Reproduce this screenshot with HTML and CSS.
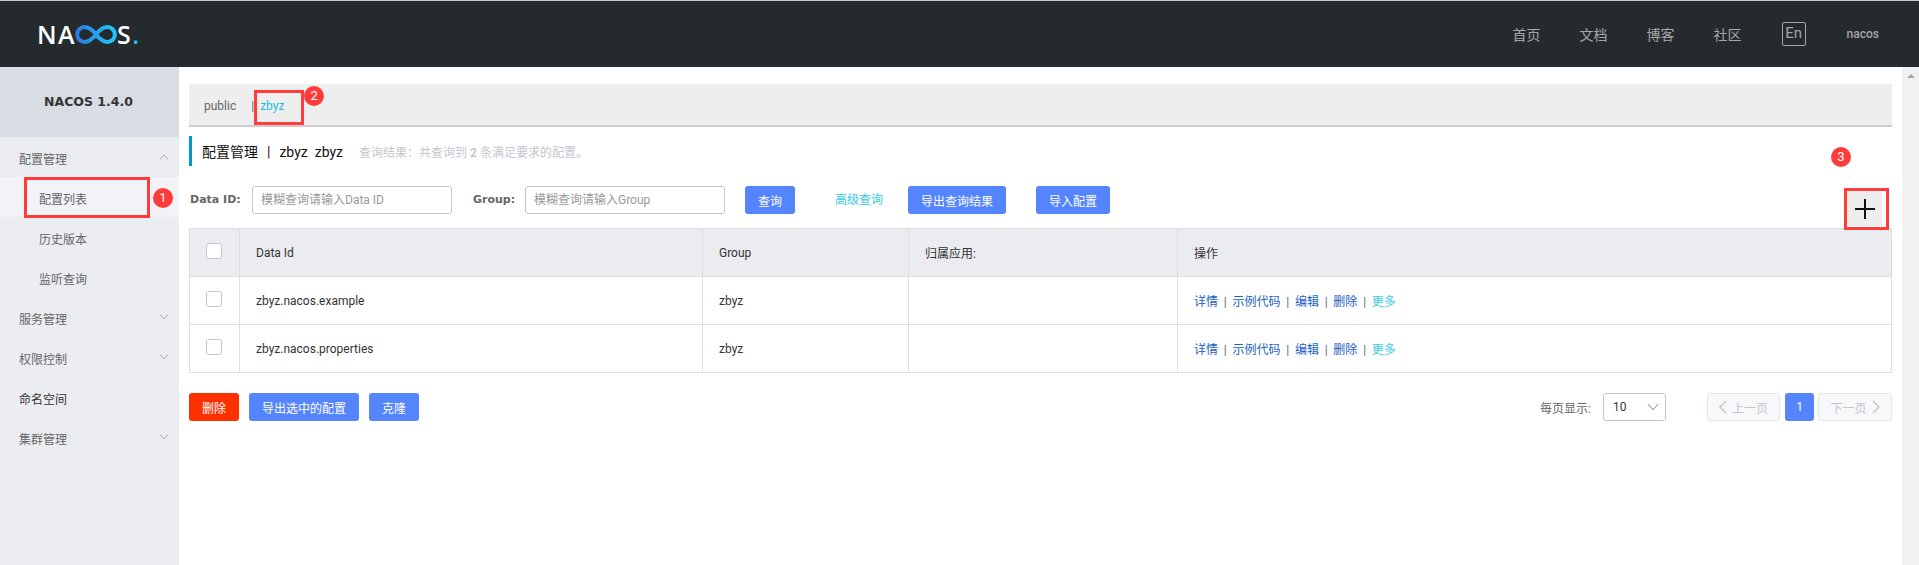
FILE: index.html
```html
<!DOCTYPE html>
<html lang="zh-CN">
<head>
  <meta charset="UTF-8" />
  <title>Nacos</title>
  <link rel="stylesheet" href="styles.css">
</head>
<body>
  <header class="topbar">
    <div class="logo">
      <span>NA</span>
      <svg class="logo-loop" width="44" height="19" viewBox="0 0 42 18" preserveAspectRatio="none">
        <defs>
          <linearGradient id="loop" x1="0" x2="1" y1="0" y2="0">
            <stop offset="0" stop-color="#2f78e0" />
            <stop offset="1" stop-color="#1fc9f7" />
          </linearGradient>
        </defs>
        <path d="M21 9C17.500 4.500 14.500 2 10 2a7 7 0 0 0 0 14c4.500 0 7.500-2.500 11-7s6.500-7 11-7a7 7 0 0 1 0 14c-4.500 0-7.500-2.500-11-7z" fill="none" stroke="url(#loop)" stroke-width="3.800" />
      </svg>
      <span>S</span><span class="logo-dot">.</span>
    </div>
    <nav class="topnav">
      <a>首页</a>
      <a>文档</a>
      <a>博客</a>
      <a>社区</a>
      <a class="lang">En</a>
      <a class="user">nacos</a>
    </nav>
  </header>

  <div class="layout">
    <aside class="sidebar">
      <div class="version">NACOS 1.4.0</div>
      <div class="menu-item"><span>配置管理</span><svg class="arrow" width="10" height="6" viewBox="0 0 10 6"><path d="M1 5.500l4-4.500 4 4.500" /></svg></div>
      <div class="menu-item sub active">
        <span>配置列表</span>
        <i class="mark-box box-one"></i>
        <b class="badge badge-one">1</b>
      </div>
      <div class="menu-item sub"><span>历史版本</span></div>
      <div class="menu-item sub"><span>监听查询</span></div>
      <div class="menu-item"><span>服务管理</span><svg class="arrow" width="10" height="6" viewBox="0 0 10 6"><path d="M1 .5l4 4.500 4-4.500" /></svg></div>
      <div class="menu-item"><span>权限控制</span><svg class="arrow" width="10" height="6" viewBox="0 0 10 6"><path d="M1 .5l4 4.500 4-4.500" /></svg></div>
      <div class="menu-item dark"><span>命名空间</span></div>
      <div class="menu-item"><span>集群管理</span><svg class="arrow" width="10" height="6" viewBox="0 0 10 6"><path d="M1 .5l4 4.500 4-4.500" /></svg></div>
    </aside>

    <main class="content">
      <div class="tabs">
        <span class="tab">public</span>
        <span class="tab-sep">|</span>
        <span class="tab current">
          zbyz
          <i class="mark-box box-two"></i>
          <b class="badge badge-two">2</b>
        </span>
      </div>

      <div class="title">
        <h2>配置管理<span class="title-sep">|</span>zbyz<span class="title-ns">zbyz</span></h2>
        <p>查询结果：共查询到 <b>2</b> 条满足要求的配置。</p>
      </div>

      <div class="search">
        <label class="search-label">Data ID:</label>
        <input class="search-input" type="text" placeholder="模糊查询请输入Data ID" />
        <label class="search-label group-label">Group:</label>
        <input class="search-input" type="text" placeholder="模糊查询请输入Group" />
        <button class="btn query">查询</button>
        <a class="advanced">高级查询</a>
        <button class="btn export">导出查询结果</button>
        <button class="btn import">导入配置</button>
        <div class="plus">
          <svg width="20" height="20" viewBox="0 0 20 20"><path d="M0 10h20M10 0v20" /></svg>
          <i class="mark-box box-three"></i>
          <b class="badge badge-three">3</b>
        </div>
      </div>

      <table class="grid">
        <colgroup>
          <col class="col-check" />
          <col class="col-id" />
          <col class="col-group" />
          <col class="col-app" />
          <col />
        </colgroup>
        <thead>
          <tr>
            <th><span class="check"></span></th>
            <th>Data Id</th>
            <th>Group</th>
            <th>归属应用:</th>
            <th>操作</th>
          </tr>
        </thead>
        <tbody>
          <tr>
            <td><span class="check"></span></td>
            <td>zbyz.nacos.example</td>
            <td>zbyz</td>
            <td></td>
            <td class="actions"><a>详情</a><s>|</s><a>示例代码</a><s>|</s><a>编辑</a><s>|</s><a>删除</a><s>|</s><a class="more">更多</a></td>
          </tr>
          <tr>
            <td><span class="check"></span></td>
            <td>zbyz.nacos.properties</td>
            <td>zbyz</td>
            <td></td>
            <td class="actions"><a>详情</a><s>|</s><a>示例代码</a><s>|</s><a>编辑</a><s>|</s><a>删除</a><s>|</s><a class="more">更多</a></td>
          </tr>
        </tbody>
      </table>

      <div class="footer">
        <button class="btn danger">删除</button>
        <button class="btn export-selected">导出选中的配置</button>
        <button class="btn clone">克隆</button>
        <span class="page-size-label">每页显示:</span>
        <div class="page-size">10<svg class="select-arrow" width="12" height="8" viewBox="0 0 12 8"><path d="M1 1l5 6 5-6" /></svg></div>
        <button class="page-btn prev"><svg width="8" height="14" viewBox="0 0 8 14"><path d="M7 1L1 7l6 6" /></svg>上一页</button>
        <button class="page-num">1</button>
        <button class="page-btn next">下一页<svg width="8" height="14" viewBox="0 0 8 14"><path d="M1 1l6 6-6 6" /></svg></button>
      </div>
    </main>

    <div class="scrollbar"><span class="scroll-up"></span></div>
  </div>
</body>
</html>
```

FILE: styles.css
```css
* {
  box-sizing: border-box;
}
html, body {
  height: 100%;
}
body {
  margin: 0;
  overflow: hidden;
  background: #fff;
  color: #333;
  font-family: Roboto, "Noto Sans CJK SC", sans-serif;
  font-size: 12px;
}
button {
  font-family: inherit;
  font-size: 12px;
}

/* top bar */
.topbar {
  display: flex;
  align-items: center;
  justify-content: space-between;
  height: 67px;
  padding: 0 40px 0 37px;
  background: #252a2f;
  border-top: 1px solid #c8c8c8;
}
.logo {
  display: flex;
  align-items: center;
  color: #fff;
  font-family: "Open Sans", sans-serif;
  font-size: 25px;
  font-weight: 600;
  letter-spacing: 1.500px;
  line-height: 18px;
}
.logo-loop {
  margin: 0 -1px 0 -2px;
}
.logo-dot {
  color: #1fc9f7;
}
.topnav {
  display: flex;
  align-items: center;
  color: #a5a7a9;
  font-size: 14px;
}
.topnav a {
  margin-left: 39px;
}
.topnav .lang {
  width: 24px;
  height: 24px;
  margin-left: 40px;
  border: 1px solid #a5a7a9;
  border-radius: 2px;
  font-size: 15px;
  line-height: 20px;
  text-align: center;
}
.topnav .user {
  margin-left: 41px;
  font-size: 12px;
  font-weight: 500;
}

/* sidebar */
.layout {
  display: flex;
  height: 498px;
}
.sidebar {
  flex: none;
  width: 179px;
  background: #ebedf1;
  color: #666;
}
.version {
  height: 70px;
  padding-right: 2px;
  background: #d8dde4;
  color: #333;
  font-family: "DejaVu Sans", sans-serif;
  font-size: 12.500px;
  font-weight: 700;
  line-height: 70px;
  text-align: center;
}
.menu-item {
  position: relative;
  display: flex;
  align-items: center;
  justify-content: space-between;
  height: 40px;
  padding: 0 10px 0 19px;
}
.menu-item span {
  padding-top: 3px;
}
.menu-item.sub {
  padding-left: 39px;
}
.menu-item.active {
  background: #f2f3f7;
}
.menu-item.dark {
  color: #333;
}
.arrow {
  fill: none;
  stroke: #a9abb0;
  stroke-width: 1;
}

/* red annotations */
.mark-box {
  position: absolute;
  border: 3px solid #ff3b3b;
}
.badge {
  position: absolute;
  width: 20px;
  height: 20px;
  border-radius: 50%;
  background: #ff3b3b;
  color: #fff;
  font-size: 13px;
  font-style: normal;
  font-weight: 400;
  line-height: 20px;
  text-align: center;
}
.box-one {
  left: 24px;
  top: 0;
  width: 126px;
  height: 41px;
}
.badge-one {
  left: 153px;
  top: 11px;
}
.box-two {
  left: -6px;
  top: -8px;
  width: 50px;
  height: 35px;
}
.badge-two {
  left: 44px;
  top: -12px;
}
.box-three {
  left: -3px;
  top: -3px;
  width: 45px;
  height: 42px;
}
.badge-three {
  left: -16px;
  top: -44px;
}

/* main */
.content {
  flex: 1;
  min-width: 0;
  padding: 17px 10px 0;
}
.tabs {
  display: flex;
  align-items: center;
  height: 43px;
  padding: 2px 0 0 15px;
  background: #eee;
  border-bottom: 2px solid #ccc;
  color: #666;
  line-height: 16px;
}
.tab-sep {
  margin-left: 15px;
  margin-right: 6px;
}
.tab.current {
  position: relative;
  color: #22bfe0;
}
.title {
  display: flex;
  align-items: center;
  height: 30px;
  margin-top: 9px;
  padding-left: 10px;
  border-left: 3px solid #09c;
}
.title h2 {
  margin: 0;
  color: #111;
  font-size: 14px;
  font-weight: 400;
}
.title-sep {
  margin: 0 9px;
}
.title-ns {
  margin-left: 7px;
}
.title p {
  margin: 0 0 0 16px;
  color: #c4c6cf;
}

/* search row */
.search {
  display: flex;
  align-items: flex-start;
  height: 42px;
  margin-top: 20px;
}
.search-label {
  width: 63px;
  padding-left: 1px;
  color: #666;
  font-family: "DejaVu Sans", sans-serif;
  font-size: 11px;
  font-weight: 700;
  line-height: 28px;
}
.group-label {
  width: 53px;
  margin-left: 20px;
}
.search-input {
  width: 200px;
  height: 28px;
  padding: 0 8px;
  border: 1px solid #c4c6cf;
  border-radius: 3px;
  font-family: inherit;
  font-size: 12px;
}
.search-input::placeholder {
  color: #999;
}
.btn {
  height: 28px;
  padding: 0;
  border: 0;
  border-radius: 3px;
  background: #5584ff;
  color: #fff;
}
.query {
  width: 50px;
  margin-left: 20px;
}
.advanced {
  margin-left: 40px;
  margin-right: 25px;
  color: #33cde5;
  line-height: 28px;
}
.export {
  width: 98px;
}
.import {
  width: 74px;
  margin-left: 30px;
}
.plus {
  position: relative;
  display: flex;
  align-items: center;
  justify-content: center;
  width: 35px;
  height: 35px;
  margin: 5px 10px 0 auto;
  background: #eee;
}
.plus svg {
  fill: none;
  stroke: #111;
  stroke-width: 2;
}

/* table */
.grid {
  width: 100%;
  border-collapse: collapse;
  table-layout: fixed;
}
.col-check {
  width: 50px;
}
.col-id {
  width: 463px;
}
.col-group {
  width: 206px;
}
.col-app {
  width: 269px;
}
.grid th, .grid td {
  height: 48px;
  padding: 0 16px;
  border: 1px solid #dcdee3;
  font-weight: 400;
  text-align: left;
}
.grid th {
  background: #ebecf0;
}
.grid th:first-child, .grid td:first-child {
  padding: 0 2px 3px 0;
  text-align: center;
}
.check {
  display: inline-block;
  width: 16px;
  height: 16px;
  border: 1px solid #c4c6cf;
  border-radius: 3px;
  background: #fff;
  vertical-align: middle;
}
.actions a {
  color: #1a5fc4;
}
.actions a.more {
  color: #33cde5;
}
.actions s {
  margin: 0 5.750px;
  color: #666;
  text-decoration: none;
}

/* bottom row */
.footer {
  display: flex;
  align-items: center;
  margin-top: 20px;
}
.danger {
  width: 50px;
  background: #ff3000;
}
.export-selected {
  width: 110px;
  margin-left: 10px;
}
.clone {
  width: 50px;
  margin-left: 10px;
}
.page-size-label {
  margin-left: auto;
  color: #666;
}
.page-size {
  display: flex;
  align-items: center;
  justify-content: space-between;
  width: 63px;
  height: 28px;
  margin-left: 12px;
  padding: 0 6px 0 9px;
  border: 1px solid #c4c6cf;
  border-radius: 3px;
}
.select-arrow {
  fill: none;
  stroke: #888;
}
.page-btn {
  display: flex;
  align-items: center;
  justify-content: center;
  gap: 5px;
  width: 73px;
  height: 28px;
  padding: 0;
  border: 1px solid #e6e7eb;
  border-radius: 3px;
  background: #f7f8fa;
  color: #c4c6cf;
}
.page-btn svg {
  fill: none;
  stroke: #c4c6cf;
  stroke-width: 1.400;
}
.prev {
  margin-left: 41px;
}
.next {
  width: 74px;
}
.page-num {
  width: 29px;
  height: 28px;
  margin: 0 4px 0 5px;
  padding: 0;
  border: 0;
  border-radius: 3px;
  background: #5584ff;
  color: #fff;
}

/* fake browser scrollbar */
.scrollbar {
  flex: none;
  width: 17px;
  background: #f1f1f1;
}
.scroll-up {
  display: block;
  width: 0;
  margin: 7px auto 0;
  border: 4px solid transparent;
  border-top: 0;
  border-bottom: 4px solid #a3a3a3;
}
```
